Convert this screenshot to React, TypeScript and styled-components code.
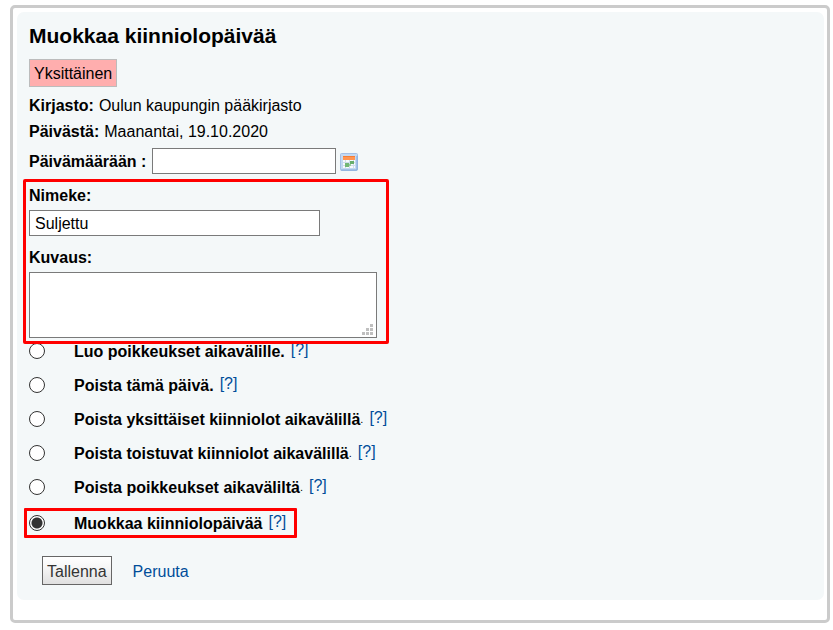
import React from "react";
import styled, { createGlobalStyle } from "styled-components";

const GlobalStyle = createGlobalStyle`
  * { box-sizing: border-box; }
  body {
    margin: 0;
    background: #fff;
    color: #000;
    font: 16px/26px "Liberation Sans", Arial, sans-serif;
  }
`;

const Frame = styled.div`
  margin: 5px 3px 7px 10px;
  padding: 4px 3px 20px 4px;
  border: 3px solid #cbcbcb;
  border-radius: 5px;
  background: #fff;
`;

const Panel = styled.form`
  padding: 12px 12px 15px;
  border-radius: 7px;
  background: #f4f8f9;
`;

const Title = styled.h1`
  margin: 0 0 11px;
  font-size: 21px;
  line-height: 24px;
`;

const Badge = styled.div`
  width: fit-content;
  margin-bottom: 6px;
  padding: 2px 4px 0;
  border: 1px solid #bcbcbc;
  background: #ffaeae;
  line-height: 24px;
`;

const Facts = styled.dl`
  margin: 0;
`;

const Fact = styled.div`
  display: flex;
  gap: 5px;
  dt { font-weight: bold; }
  dd { margin: 0; }
`;

const DateRow = styled.div`
  display: flex;
  align-items: center;
  gap: 4px;
  margin: 3px 0 5px;
`;

const FieldLabel = styled.label`
  padding-top: 2px;
  font-weight: bold;
  line-height: 24px;
`;

const DateLabel = styled(FieldLabel)`
  padding-right: 2px;
`;

const TextInput = styled.input<{ $width: number }>`
  display: block;
  width: ${(p) => p.$width}px;
  max-width: 100%;
  height: 26px;
  padding: 2px 5px 0;
  border: 1px solid #7a7a7a;
  border-radius: 0;
  background: #fff;
  color: #000;
  font: inherit;
  outline: none;
`;

const CalendarButton = styled.button`
  display: flex;
  padding: 1px 0 0;
  border: 0;
  background: none;
  cursor: pointer;
`;

const MarkedFields = styled.div`
  position: relative;
  z-index: 1;
  display: grid;
  gap: 8px;
  width: fit-content;
  margin-left: -6px;
  padding: 0 9px 3px 3px;
  border: 3px solid #f00;
  border-radius: 2px;
`;

const Field = styled.div`
  display: grid;
  gap: 2px;
`;

const AreaWrap = styled.div`
  position: relative;
  width: 348px;
  height: 66px;
`;

const TextArea = styled.textarea`
  display: block;
  width: 100%;
  height: 100%;
  padding: 2px 5px;
  border: 1px solid #7a7a7a;
  background: #fff;
  font: inherit;
  resize: none;
  outline: none;
`;

const Grip = styled.svg`
  position: absolute;
  right: 4px;
  bottom: 3px;
  pointer-events: none;
`;

const Options = styled.div`
  display: grid;
  gap: 16px;
  margin-top: -2px;
`;

const Option = styled.div<{ $marked?: boolean }>`
  display: flex;
  align-items: center;
  width: fit-content;
  line-height: 16px;
  ${(p) =>
    p.$marked &&
    `
    margin: -4px 0 0 -5px;
    padding: 3px 8px 3px 2px;
    border: 3px solid #f00;
    border-radius: 1px;
  `}
`;

const Radio = styled.input`
  appearance: none;
  flex: none;
  width: 16px;
  height: 16px;
  margin: 0 29px 0 0;
  border: 1px solid #333;
  border-radius: 50%;
  background: #fff;
  &:checked {
    background: radial-gradient(circle, #333 0 5px, #fff 6px);
  }
`;

const OptionLabel = styled.label`
  padding-top: 2px;
  font-weight: bold;
`;

const Stop = styled.span`
  font-size: 11px;
`;

const HelpLink = styled.a`
  margin: 0 0 2px 6px;
  color: #004d99;
  text-decoration: none;
`;

const Actions = styled.div`
  display: flex;
  align-items: center;
  gap: 21px;
  margin: 18px 0 0 13px;
`;

const SaveButton = styled.button`
  height: 29px;
  padding: 2px 4px 0;
  border: 1px solid #666;
  border-radius: 0;
  background: linear-gradient(#fff, #f7f7f7 35%, #e0e0e0);
  color: #333;
  font: inherit;
  cursor: pointer;
`;

const CancelLink = styled.a`
  padding-top: 2px;
  color: #004d99;
  text-decoration: none;
`;

const CalendarIcon = () => (
  <svg width="18" height="18" viewBox="0 0 18 18" aria-hidden="true">
    <rect x="0.5" y="0.5" width="17" height="17" rx="1" fill="#c4d9f2" stroke="#a3c0e6" />
    <path d="M1 17h16V3" fill="none" stroke="#83a9da" />
    <rect x="3" y="3" width="12" height="12" fill="#f8fafc" />
    <rect x="3" y="3" width="12" height="4" fill="#ff9552" />
    <path d="M3 3.5h12" stroke="#f57d34" />
    <path d="M3 9.5h12M3 12.5h12M5.5 7v8M9.5 7v8M13.5 7v8" stroke="#cfddeb" />
    <rect x="10" y="8" width="4" height="3" fill="#67ad6b" />
    <rect x="5" y="10" width="4" height="4" fill="#73b775" />
    <rect x="9" y="11" width="2" height="2" fill="#9ccb9d" />
  </svg>
);

const options = [
  { id: "exception", text: "Luo poikkeukset aikavälille." },
  { id: "delete", text: "Poista tämä päivä." },
  { id: "single", text: "Poista yksittäiset kiinniolot aikavälillä", stop: true },
  { id: "repeat", text: "Poista toistuvat kiinniolot aikavälillä", stop: true },
  { id: "exceptions", text: "Poista poikkeukset aikaväliltä", stop: true },
  { id: "edit", text: "Muokkaa kiinniolopäivää", marked: true },
];

export default function App() {
  return (
    <>
      <GlobalStyle />
      <Frame>
        <Panel onSubmit={(e) => e.preventDefault()}>
          <Title>Muokkaa kiinniolopäivää</Title>
          <Badge>Yksittäinen</Badge>
          <Facts>
            <Fact>
              <dt>Kirjasto:</dt>
              <dd>Oulun kaupungin pääkirjasto</dd>
            </Fact>
            <Fact>
              <dt>Päivästä:</dt>
              <dd>Maanantai, 19.10.2020</dd>
            </Fact>
          </Facts>
          <DateRow>
            <DateLabel htmlFor="until">Päivämäärään :</DateLabel>
            <TextInput id="until" type="text" $width={184} />
            <CalendarButton type="button" aria-label="Kalenteri">
              <CalendarIcon />
            </CalendarButton>
          </DateRow>
          <MarkedFields>
            <Field>
              <FieldLabel htmlFor="name">Nimeke:</FieldLabel>
              <TextInput id="name" type="text" defaultValue="Suljettu" $width={291} />
            </Field>
            <Field>
              <FieldLabel htmlFor="description">Kuvaus:</FieldLabel>
              <AreaWrap>
                <TextArea id="description" />
                <Grip width="11" height="11" viewBox="0 0 11 11" fill="#bfbfbf" aria-hidden="true">
                  <path d="M8 0h3v3H8zM4 4h3v3H4zM8 4h3v3H8zM0 8h3v3H0zM4 8h3v3H4zM8 8h3v3H8z" />
                </Grip>
              </AreaWrap>
            </Field>
          </MarkedFields>
          <Options role="radiogroup" aria-label="Toiminto">
            {options.map((o) => (
              <Option key={o.id} $marked={o.marked}>
                <Radio type="radio" name="operation" id={o.id} defaultChecked={o.marked} />
                <OptionLabel htmlFor={o.id}>{o.text}</OptionLabel>
                {o.stop && <Stop>.</Stop>}
                <HelpLink href="#">[?]</HelpLink>
              </Option>
            ))}
          </Options>
          <Actions>
            <SaveButton type="submit">Tallenna</SaveButton>
            <CancelLink href="#">Peruuta</CancelLink>
          </Actions>
        </Panel>
      </Frame>
    </>
  );
}
